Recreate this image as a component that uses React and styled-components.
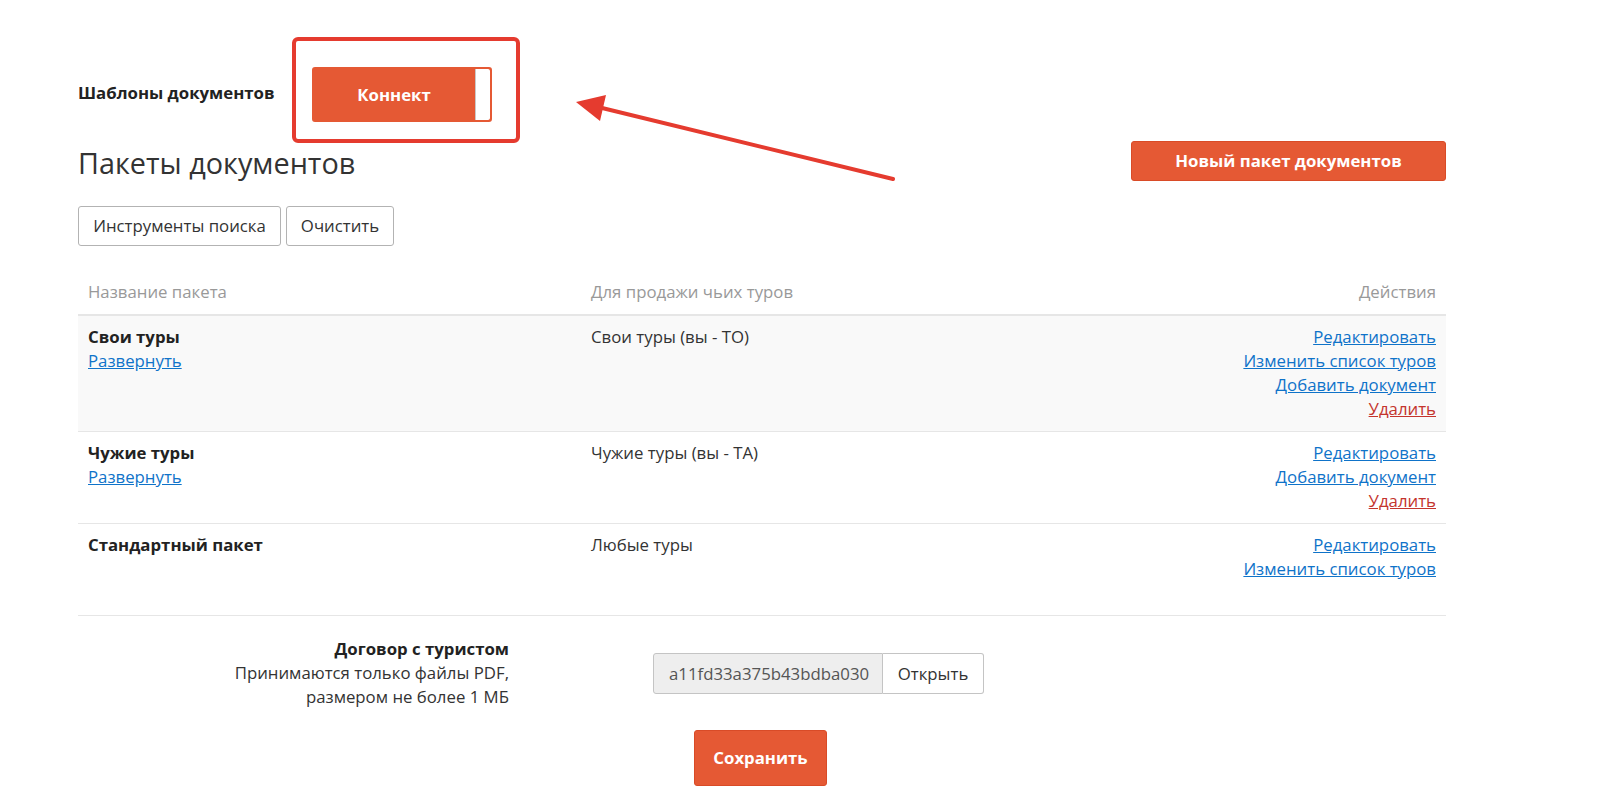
import React from 'react'
import styled, { createGlobalStyle } from 'styled-components'

const GlobalStyle = createGlobalStyle`
  body {
    margin: 0;
    background: #fff;
    color: #333;
    font-family: "Open Sans", "Liberation Sans", sans-serif;
    font-size: 16.8px;
    line-height: 24px;
  }
`

const Root = styled.div`
  position: relative;
  width: 1599px;
  min-height: 810px;
`
const Page = styled.div`
  width: 1368px;
  padding: 67px 0 0 78px;
`
const TopRow = styled.div`
  display: flex;
  align-items: center;
  height: 55px;
`
const SectionTitle = styled.div`
  font-weight: 700;
  margin-right: 37px;
  padding-bottom: 3px;
  color: #222;
`
const ConnectWrap = styled.div`
  position: relative;
`
const Highlight = styled.div`
  position: absolute;
  left: -20px;
  top: -30px;
  right: -28px;
  bottom: -21px;
  border: 4px solid #e53b2f;
  border-radius: 6px;
  pointer-events: none;
`
const ConnectButton = styled.div`
  display: flex;
  width: 180px;
  height: 55px;
  box-sizing: border-box;
  background: #e55934;
  border: 2px solid #e55934;
  border-radius: 3px;
  overflow: hidden;
`
const ConnectLabel = styled.div`
  flex: 1;
  display: flex;
  align-items: center;
  justify-content: center;
  color: #fff;
  font-weight: 700;
`
const ConnectToggle = styled.div`
  width: 14px;
  background: #fff;
  border-left: 1px solid #c9c9c9;
  border-radius: 0 2px 2px 0;
`
const Arrow = styled.svg`
  position: absolute;
  left: 0;
  top: 0;
  pointer-events: none;
`
const HeadRow = styled.div`
  display: flex;
  justify-content: space-between;
  align-items: center;
  height: 40px;
  margin-top: 19px;
`
const Heading = styled.h2`
  margin: 0;
  font-size: 28.8px;
  font-weight: 400;
  line-height: 36px;
  padding-top: 4px;
  color: #333;
`
const PrimaryButton = styled.div`
  display: flex;
  align-items: center;
  justify-content: center;
  box-sizing: border-box;
  width: ${p => p.w}px;
  height: ${p => p.h}px;
  background: #e55934;
  border: 1px solid #d94b27;
  border-radius: 3px;
  color: #fff;
  font-weight: 700;
`
const ToolRow = styled.div`
  display: flex;
  gap: 5px;
  margin-top: 25px;
`
const GhostButton = styled.div`
  display: flex;
  align-items: center;
  justify-content: center;
  box-sizing: border-box;
  width: ${p => p.w}px;
  height: 40px;
  border: 1px solid #b3b3b3;
  border-radius: 3px;
  background: #fff;
  color: #333;
`
const Table = styled.div`
  margin-top: 24px;
`
const Row = styled.div`
  display: grid;
  grid-template-columns: 503px 1fr 1fr;
  background: ${p => (p.striped ? '#f9f9f9' : '#fff')};
  border-top: ${p => (p.head ? 'none' : '1px solid #e6e6e6')};
  border-bottom: ${p => (p.head ? '1px solid #e6e6e6' : 'none')};
  color: ${p => (p.head ? '#999' : '#333')};
`
const Cell = styled.div`
  padding: ${p => (p.head ? '10px' : '9px 10px 10px')};
  display: flex;
  flex-direction: column;
  align-items: ${p => (p.right ? 'flex-end' : 'flex-start')};
`
const Name = styled.div`
  font-weight: 700;
  color: #222;
`
const Link = styled.a`
  color: ${p => (p.danger ? '#c4342d' : '#0f73c9')};
  text-decoration: underline;
  cursor: pointer;
`
const Divider = styled.div`
  margin-top: 24px;
  border-top: 1px solid #e6e6e6;
  padding-top: 21px;
`
const FormRow = styled.div`
  display: flex;
  align-items: flex-start;
`
const FormLabel = styled.div`
  width: 431px;
  margin-right: 144px;
  text-align: right;
`
const LabelTitle = styled.div`
  font-weight: 700;
  color: #222;
`
const InputGroup = styled.div`
  display: flex;
  height: 41px;
  margin-top: 16px;
`
const FileInput = styled.div`
  display: flex;
  align-items: center;
  box-sizing: border-box;
  width: 230px;
  padding-left: 15px;
  background: #eee;
  border: 1px solid #c4c4c4;
  border-radius: 3px 0 0 3px;
  color: #555;
`
const AddonButton = styled.div`
  display: flex;
  align-items: center;
  justify-content: center;
  box-sizing: border-box;
  width: 101px;
  border: 1px solid #c4c4c4;
  border-left: none;
  border-radius: 0 3px 3px 0;
  background: #fff;
  color: #333;
`
const SaveRow = styled.div`
  margin-top: 21px;
  padding-left: 616px;
`

const packages = [
  {
    name: 'Свои туры',
    expand: true,
    owner: 'Свои туры (вы - ТО)',
    actions: ['Редактировать', 'Изменить список туров', 'Добавить документ', 'Удалить'],
  },
  {
    name: 'Чужие туры',
    expand: true,
    owner: 'Чужие туры (вы - ТА)',
    actions: ['Редактировать', 'Добавить документ', 'Удалить'],
  },
  {
    name: 'Стандартный пакет',
    expand: false,
    owner: 'Любые туры',
    actions: ['Редактировать', 'Изменить список туров'],
  },
]

export default function App() {
  return (
    <Root>
      <GlobalStyle />
      <Page>
        <TopRow>
          <SectionTitle>Шаблоны документов</SectionTitle>
          <ConnectWrap>
            <ConnectButton>
              <ConnectLabel>Коннект</ConnectLabel>
              <ConnectToggle />
            </ConnectButton>
            <Highlight />
          </ConnectWrap>
        </TopRow>

        <HeadRow>
          <Heading>Пакеты документов</Heading>
          <PrimaryButton w={315} h={40}>Новый пакет документов</PrimaryButton>
        </HeadRow>

        <ToolRow>
          <GhostButton w={203}>Инструменты поиска</GhostButton>
          <GhostButton w={108}>Очистить</GhostButton>
        </ToolRow>

        <Table>
          <Row head>
            <Cell head>Название пакета</Cell>
            <Cell head>Для продажи чьих туров</Cell>
            <Cell head right>Действия</Cell>
          </Row>
          {packages.map((p, i) => (
            <Row key={p.name} striped={i === 0}>
              <Cell>
                <Name>{p.name}</Name>
                {p.expand && <Link>Развернуть</Link>}
              </Cell>
              <Cell>{p.owner}</Cell>
              <Cell right>
                {p.actions.map(a => (
                  <Link key={a} danger={a === 'Удалить'}>{a}</Link>
                ))}
              </Cell>
            </Row>
          ))}
        </Table>

        <Divider>
          <FormRow>
            <FormLabel>
              <LabelTitle>Договор с туристом</LabelTitle>
              <div>Принимаются только файлы PDF,</div>
              <div>размером не более 1 МБ</div>
            </FormLabel>
            <InputGroup>
              <FileInput>a11fd33a375b43bdba030</FileInput>
              <AddonButton>Открыть</AddonButton>
            </InputGroup>
          </FormRow>
          <SaveRow>
            <PrimaryButton w={133} h={56}>Сохранить</PrimaryButton>
          </SaveRow>
        </Divider>
      </Page>

      <Arrow width="1599" height="220" viewBox="0 0 1599 220">
        <line x1="893" y1="179" x2="598" y2="107" stroke="#e53b2f" strokeWidth="4" strokeLinecap="round" />
        <polygon points="576,102 606,95 600,121" fill="#e53b2f" />
      </Arrow>
    </Root>
  )
}
